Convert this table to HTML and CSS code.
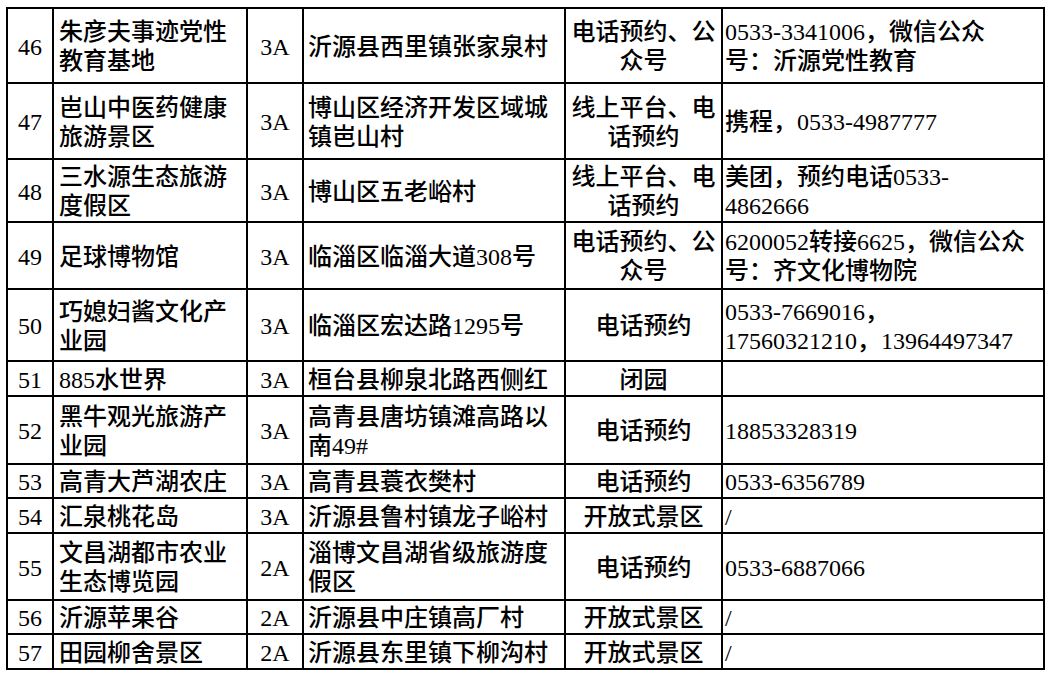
FILE: index.html
```html
<!DOCTYPE html>
<html lang="zh-CN">
<head>
<meta charset="utf-8">
<title>景区预约信息</title>
<link rel="stylesheet" href="styles.css">
</head>
<body>
<table class="sites">
  <colgroup>
    <col class="c-no"><col class="c-name"><col class="c-level"><col class="c-addr"><col class="c-way"><col class="c-contact">
  </colgroup>
  <tbody>
    <tr><td class="no">46</td><td class="name">朱彦夫事迹党性教育基地</td><td class="level">3A</td><td class="addr">沂源县西里镇张家泉村</td><td class="way">电话预约、公众号</td><td class="contact">0533-3341006，微信公众<br>号：沂源党性教育</td></tr>
    <tr><td class="no">47</td><td class="name">岜山中医药健康旅游景区</td><td class="level">3A</td><td class="addr">博山区经济开发区域城镇岜山村</td><td class="way">线上平台、电话预约</td><td class="contact">携程，0533-4987777</td></tr>
    <tr><td class="no">48</td><td class="name">三水源生态旅游度假区</td><td class="level">3A</td><td class="addr">博山区五老峪村</td><td class="way">线上平台、电话预约</td><td class="contact">美团，预约电话0533-<br>4862666</td></tr>
    <tr><td class="no">49</td><td class="name">足球博物馆</td><td class="level">3A</td><td class="addr">临淄区临淄大道308号</td><td class="way">电话预约、公众号</td><td class="contact">6200052转接6625，微信公众<br>号：齐文化博物院</td></tr>
    <tr><td class="no">50</td><td class="name">巧媳妇酱文化产业园</td><td class="level">3A</td><td class="addr">临淄区宏达路1295号</td><td class="way">电话预约</td><td class="contact">0533-7669016，<br>17560321210，13964497347</td></tr>
    <tr><td class="no">51</td><td class="name">885水世界</td><td class="level">3A</td><td class="addr">桓台县柳泉北路西侧红</td><td class="way">闭园</td><td class="contact"></td></tr>
    <tr><td class="no">52</td><td class="name">黑牛观光旅游产业园</td><td class="level">3A</td><td class="addr">高青县唐坊镇滩高路以南49#</td><td class="way">电话预约</td><td class="contact">18853328319</td></tr>
    <tr><td class="no">53</td><td class="name">高青大芦湖农庄</td><td class="level">3A</td><td class="addr">高青县蓑衣樊村</td><td class="way">电话预约</td><td class="contact">0533-6356789</td></tr>
    <tr><td class="no">54</td><td class="name">汇泉桃花岛</td><td class="level">3A</td><td class="addr">沂源县鲁村镇龙子峪村</td><td class="way">开放式景区</td><td class="contact">/</td></tr>
    <tr><td class="no">55</td><td class="name">文昌湖都市农业生态博览园</td><td class="level">2A</td><td class="addr">淄博文昌湖省级旅游度假区</td><td class="way">电话预约</td><td class="contact">0533-6887066</td></tr>
    <tr><td class="no">56</td><td class="name">沂源苹果谷</td><td class="level">2A</td><td class="addr">沂源县中庄镇高厂村</td><td class="way">开放式景区</td><td class="contact">/</td></tr>
    <tr><td class="no">57</td><td class="name">田园柳舍景区</td><td class="level">2A</td><td class="addr">沂源县东里镇下柳沟村</td><td class="way">开放式景区</td><td class="contact">/</td></tr>
  </tbody>
</table>
</body>
</html>
```
FILE: styles.css
```css
html, body {
  margin: 0;
  padding: 0;
  background: #fff;
}

body {
  font-family: "Liberation Serif", "Noto Sans CJK SC", serif;
  font-size: 24px;
  font-weight: 500;
  line-height: 29px;
  color: #000;
}

.sites {
  margin: 7px 0 0 6px;
  width: 1039px;
  table-layout: fixed;
  border-collapse: collapse;
}

.c-no { width: 46px; }
.c-name { width: 194px; }
.c-level { width: 56px; }
.c-addr { width: 262px; }
.c-way { width: 157px; }
.c-contact { width: 322px; }

.sites td {
  border: 2px solid #000;
  padding: 3px 4px 0;
  vertical-align: middle;
  text-align: left;
  overflow: hidden;
}

.sites td.no,
.sites td.level {
  text-align: center;
  padding-left: 0;
  padding-right: 0;
}

.sites td.name { padding-left: 5px; padding-right: 5px; }
.sites td.addr { padding-left: 4px; padding-right: 4px; }
.sites td.way { text-align: center; padding-left: 3px; padding-right: 3px; }
.sites td.contact { padding-left: 2px; padding-right: 4px; white-space: nowrap; }

.sites tr:nth-child(1) { height: 75px; }
.sites tr:nth-child(2) { height: 76px; }
.sites tr:nth-child(3) { height: 63px; }
.sites tr:nth-child(4) { height: 67px; }
.sites tr:nth-child(5) { height: 72px; }
.sites tr:nth-child(6) { height: 35px; }
.sites tr:nth-child(7) { height: 68px; }
.sites tr:nth-child(8) { height: 34px; }
.sites tr:nth-child(9) { height: 35px; }
.sites tr:nth-child(10) { height: 67px; }
.sites tr:nth-child(11) { height: 34px; }
.sites tr:nth-child(12) { height: 35px; }
```
